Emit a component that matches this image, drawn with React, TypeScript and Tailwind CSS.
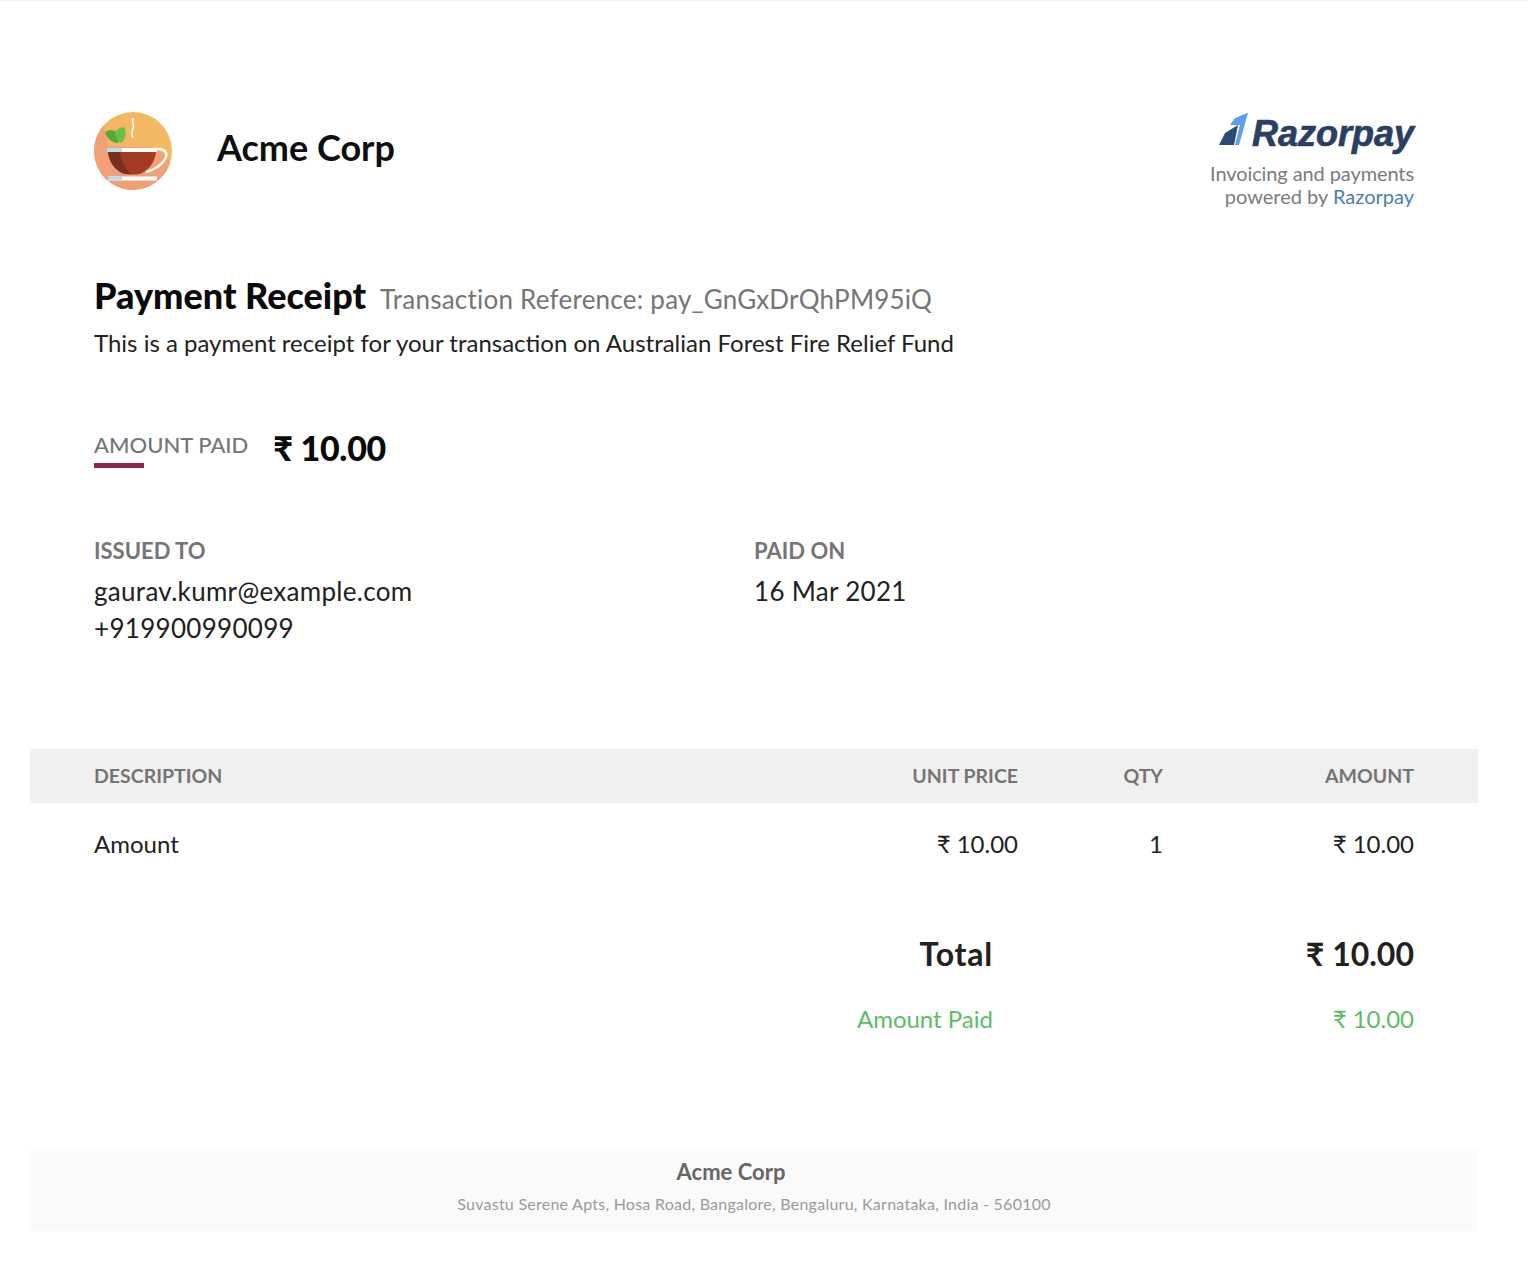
const font = "font-['Lato','Noto_Sans',sans-serif]";

function AcmeLogo() {
  return (
    <svg viewBox="0 0 78 78" className="w-[78px] h-[78px] shrink-0">
      <circle cx="39" cy="39" r="39" fill="#f4b862" />
      <path d="M10 13 A39 39 0 0 0 39 78 A39 39 0 0 0 76 50 L62 36 L14 34Z" fill="#f19f77" />
      <path d="M60 37h4c8 0 10 5 7 10-3 6-11 11-19 13" fill="none" stroke="#fff" strokeWidth="2.4" />
      <path d="M13 36h50v4H13z" fill="#fff" />
      <path d="M13 36h15v4H13z" fill="#b5dff0" />
      <path d="M14 40h48c-1 9-6 17-14 21-4 2-16 2-20 0-8-4-13-12-14-21z" fill="#a33c22" />
      <path d="M14 40h12c1 8 5 17 11 22-4 0-7 0-9-1-8-4-13-12-14-21z" fill="#7c2e1e" />
      <path d="M14 64.5h49v4H14z" fill="#fff" />
      <path d="M14 64.5h14v4H14z" fill="#b5dff0" />
      <path d="M11 20c5-3 10-2 13 1 1 4 1 7 0 10-6 0-11-4-13-11z" fill="#57a83a" />
      <path d="M21 21c1-3 5-6 9-6 3 5 2 12-3 16-3 0-5-5-6-10z" fill="#6cc04a" />
      <path d="M39 6c-2 4 2 6 0 10-1 3-2 6 0 10" fill="none" stroke="#fff" strokeWidth="1.6" />
    </svg>
  );
}

function RazorpayMark() {
  return (
    <svg viewBox="0 0 30 34" className="w-[30px] h-[34px] shrink-0">
      <path d="M0 33 L6 21 L19 13 L15 33Z" fill="#2a4a78" />
      <path d="M29 0.7 L16 6 L11 13 L21 13 L16 33 L20 33Z" fill="#5f9ef0" />
    </svg>
  );
}

function Label({ children }: { children: React.ReactNode }) {
  return <div className="text-[22px] leading-[26px] font-bold text-[#757575]">{children}</div>;
}

export default function App() {
  return (
    <div className={`${font} min-h-[1284px] bg-white border-t-2 border-[#f7f7f7] text-[#212121]`}>
      <div className="mx-[30px] w-[1448px]">
        <div className="px-16">
          {/* header */}
          <div className="flex justify-between items-start pt-[110px]">
            <div className="flex items-center gap-[45px]">
              <AcmeLogo />
              <div className="text-[36px] font-bold text-[#0f0f0f] pb-[8px]">Acme Corp</div>
            </div>
            <div className="text-right">
              <div className="flex justify-end items-start h-[34px]">
                <RazorpayMark />
                <span className="font-['Liberation_Sans',sans-serif] text-[36px] leading-[44px] font-bold italic text-[#2a3f66] [-webkit-text-stroke:0.7px_#2a3f66] ml-[3px]">Razorpay</span>
              </div>
              <div className="text-[20px] leading-[23px] text-[#7b7b7b] mt-[16px] tracking-[-0.1px]">Invoicing and payments</div>
              <div className="text-[20px] leading-[23px] text-[#7b7b7b]">
                powered by <span className="text-[#4a7fab]">Razorpay</span>
              </div>
            </div>
          </div>

          {/* title */}
          <div className="flex items-baseline gap-[14px] mt-[65px]">
            <h1 className="text-[36px] leading-[44px] font-black text-[#0a0a0a]">Payment Receipt</h1>
            <span className="text-[26px] text-[#757575] tracking-[0.23px]">Transaction Reference: pay_GnGxDrQhPM95iQ</span>
          </div>
          <p className="text-[24px] leading-[30px] mt-[9px]">
            This is a payment receipt for your transaction on Australian Forest Fire Relief Fund
          </p>

          {/* amount */}
          <div className="flex items-center gap-[25px] mt-[70px]">
            <div className="relative text-[22px] leading-[26px] font-medium text-[#757575] -translate-y-[3px]">
              AMOUNT PAID
              <div className="absolute left-0 top-[31px] w-[50px] h-[5px] bg-[#8f2352]" />
            </div>
            <div className="text-[34px] leading-[40px] font-black text-[#0a0a0a] tracking-[-0.3px]">₹ 10.00</div>
          </div>

          {/* issued */}
          <div className="grid grid-cols-[660px_1fr] mt-[70px]">
            <div>
              <Label>ISSUED TO</Label>
              <div className="text-[26px] leading-[37px] mt-[9px] tracking-[0.3px]">
                gaurav.kumr@example.com
                <br />
                +919900990099
              </div>
            </div>
            <div>
              <Label>PAID ON</Label>
              <div className="text-[26px] leading-[37px] mt-[9px] tracking-[0.3px]">16 Mar 2021</div>
            </div>
          </div>
        </div>

        {/* table */}
        <div className="grid grid-cols-[1fr_190px_145px_251px] items-center h-[54px] mt-[102px] px-16 bg-[#f0f0f0] text-[19.5px] font-bold text-[#757575]">
          <div>DESCRIPTION</div>
          <div className="text-right">UNIT PRICE</div>
          <div className="text-right">QTY</div>
          <div className="text-right">AMOUNT</div>
        </div>
        <div className="grid grid-cols-[1fr_190px_145px_251px] items-center h-[84px] px-16 pb-[2px] text-[24px]">
          <div>Amount</div>
          <div className="text-right">₹ 10.00</div>
          <div className="text-right">1</div>
          <div className="text-right">₹ 10.00</div>
        </div>

        {/* totals */}
        <div className="px-16 mt-[39px]">
          <div className="flex justify-end items-center h-[56px] text-[32px] font-bold">
            <div className="tracking-[0.8px]">Total</div>
            <div className="w-[421px] text-right">₹ 10.00</div>
          </div>
          <div className="flex justify-end items-center h-[40px] mt-[17px] text-[24px] text-[#5cbd63]">
            <div>Amount Paid</div>
            <div className="w-[421px] text-right">₹ 10.00</div>
          </div>
        </div>

        {/* footer */}
        <div className="h-[82px] mt-[110px] bg-[#fafafa] text-center pt-[9px]">
          <div className="text-[22px] leading-[28px] font-bold text-[#666] pr-[46px]">Acme Corp</div>
          <div className="text-[16px] leading-[20px] mt-[8px] text-[#9a9a9a] tracking-[0.25px]">
            Suvastu Serene Apts, Hosa Road, Bangalore, Bengaluru, Karnataka, India - 560100
          </div>
        </div>
      </div>
    </div>
  );
}
